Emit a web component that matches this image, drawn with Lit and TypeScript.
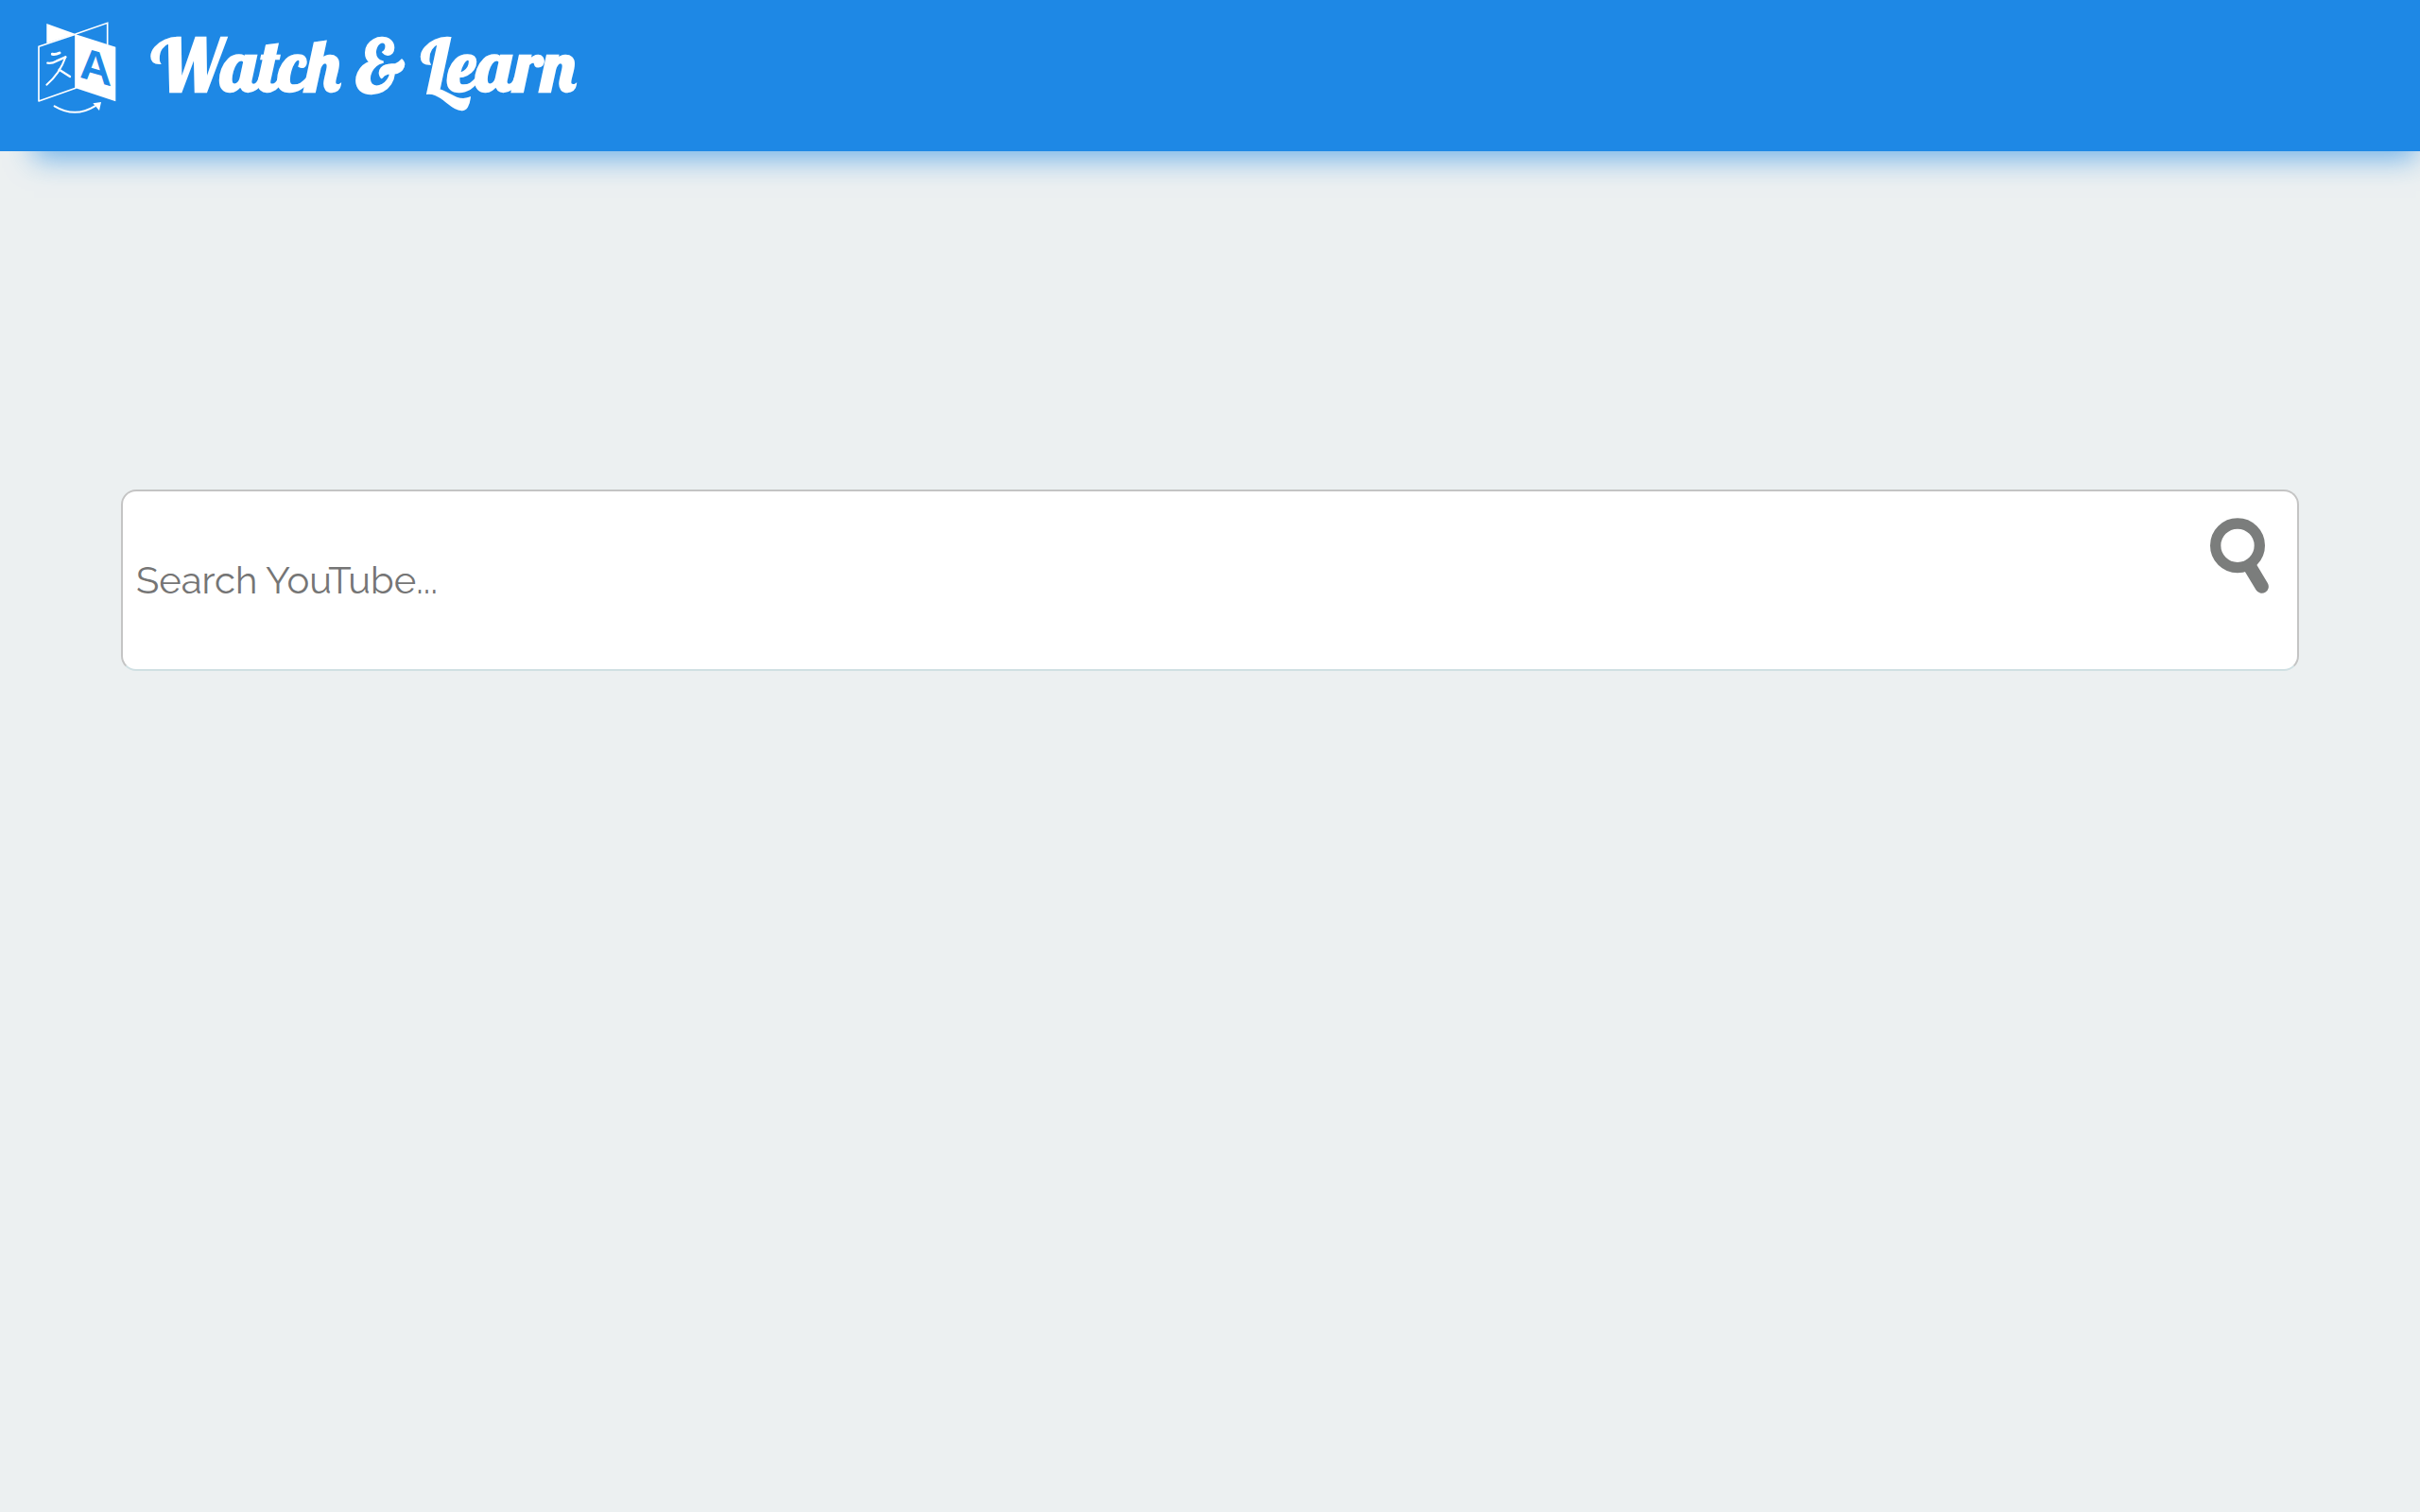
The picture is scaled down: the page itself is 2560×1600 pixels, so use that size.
import { LitElement, html, css, svg } from "lit";
import { customElement, state } from "lit/decorators.js";

const logo = svg`
  <path d="M88 45 L180 78 L88 107 Z" fill="#fff" />
  <path d="M180 78 L281 43 V112" fill="none" stroke="#fff" stroke-width="5" />
  <path d="M180 79 L307 119 V292 L180 250 Z" fill="#fff" />
  <path d="M180 79 L63 118 V291 L180 250 Z" fill="#1e88e5" stroke="#fff" stroke-width="5" stroke-linejoin="round" />
  <g fill="none" stroke="#fff" stroke-linecap="round" stroke-linejoin="round">
    <path d="M106 142 Q116 144 129 138" stroke-width="9" />
    <path d="M91 170 Q105 172 119 164 L148 151" stroke-width="7" />
    <path d="M148 151 Q130 203 88 239" stroke-width="6" />
    <path d="M128 191 L162 213" stroke-width="7" />
    <path d="M113 307 Q178 346 241 307" stroke-width="6" />
  </g>
  <path d="M235 298 L261 294 L255 321 Z" fill="#fff" />
  <text class="mark" x="243" y="160" text-anchor="middle" transform="skewY(16)">A</text>
`;

@customElement("app-root")
export class AppRoot extends LitElement {
  @state() private query = "";

  static styles = css`
    :host {
      display: block;
      min-height: 100vh;
      background: #ecf0f1;
      font-family: Raleway, Lato, sans-serif;
    }
    .bar {
      display: flex;
      align-items: flex-start;
      gap: 36px;
      padding: 22px 40px 38px;
      background: #1e88e5;
      color: #fff;
      box-shadow: 16px 28px 28px -20px rgba(30, 136, 229, 0.6);
    }
    .logo {
      width: 84px;
      height: 100px;
      flex: none;
    }
    .mark {
      font: bold 142px "Liberation Sans Narrow", "Liberation Sans", sans-serif;
      fill: #1e88e5;
    }
    .title {
      margin: 0;
      font: bold 77px/92px Lobster, "Liberation Serif", serif;
    }
    .content {
      padding: 358px 5% 0;
    }
    .search {
      display: flex;
      align-items: flex-start;
      background: #fff;
      border: 2px solid #c4c4c4;
      border-bottom-color: #d0e0e3;
      border-radius: 16px;
    }
    .field {
      flex: 1;
      min-width: 0;
      box-sizing: border-box;
      height: 188px;
      padding: 0 14px 2px;
      border: 0;
      outline: 0;
      background: transparent;
      color: #333;
      font: inherit;
      font-size: 40px;
    }
    .field::placeholder {
      color: #757575;
      opacity: 1;
    }
    .submit {
      margin: 28px 28px 0 0;
      padding: 0;
      border: 0;
      background: none;
      cursor: pointer;
    }
    .glass {
      display: block;
      width: 64px;
      height: 80px;
    }
  `;

  private onInput(e: Event) {
    this.query = (e.target as HTMLInputElement).value;
  }

  render() {
    return html`
      <header class="bar">
        <svg class="logo" viewBox="60 36 252 300" aria-hidden="true">${logo}</svg>
        <h1 class="title">Watch &amp; Learn</h1>
      </header>
      <main class="content">
        <form class="search" role="search" @submit=${(e: Event) => e.preventDefault()}>
          <input
            class="field"
            type="text"
            aria-label="Search YouTube"
            placeholder="Search YouTube..."
            .value=${this.query}
            @input=${this.onInput}
          />
          <button class="submit" type="submit" aria-label="Search">
            <svg class="glass" viewBox="83 113 192 240" aria-hidden="true">
              <circle cx="170" cy="201" r="70" fill="none" stroke="#7b7d7c" stroke-width="34" />
              <path d="M208 266 L247 331" stroke="#7b7d7c" stroke-width="43" stroke-linecap="round" />
            </svg>
          </button>
        </form>
      </main>
    `;
  }
}
